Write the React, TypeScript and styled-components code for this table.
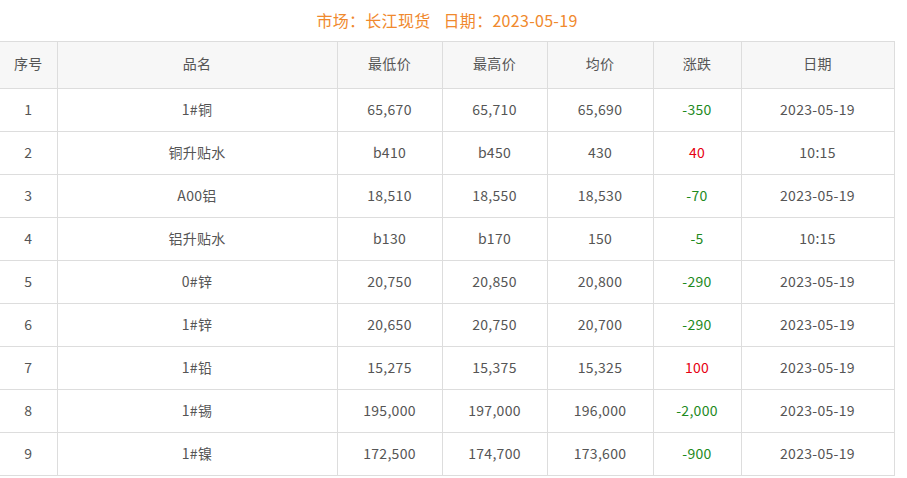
import { FC } from "react";
import styled, { createGlobalStyle } from "styled-components";

const GlobalStyle = createGlobalStyle`
	body {
		margin: 0;
		background: #fff;
		font-family: "Noto Sans CJK SC", "Noto Sans", sans-serif;
	}
`;

const Page = styled.div`
	width: 894px;
`;

const Title = styled.h2`
	display: flex;
	justify-content: center;
	gap: 13px;
	margin: 0;
	height: 41px;
	line-height: 40px;
	font-size: 16px;
	font-weight: normal;
	color: #f0892d;
	letter-spacing: 0.3px;
`;

const Table = styled.table`
	width: 894px;
	border-collapse: collapse;
	table-layout: fixed;
	font-size: 14px;
	color: #555;
	letter-spacing: 0.3px;
`;

const HeadCell = styled.th`
	height: 42px;
	padding: 0 0 4px;
	font-weight: normal;
	background: #f7f7f7;
	border: 1px solid #ddd;
	text-align: center;

	&:first-child {
		border-left: none;
	}
`;

const Cell = styled.td<{ $tone?: "up" | "down" }>`
	height: 39px;
	padding: 0 0 3px;
	border: 1px solid #ddd;
	text-align: center;
	color: ${(props) =>
		props.$tone === "up" ? "#e60012" : props.$tone === "down" ? "#1e8a1e" : "#555"};

	&:first-child {
		border-left: none;
	}
`;

type Row = {
	name: string;
	low: string;
	high: string;
	avg: string;
	change: string;
	date: string;
};

const columns = [
	{ label: "序号", width: 57 },
	{ label: "品名", width: 280 },
	{ label: "最低价", width: 105 },
	{ label: "最高价", width: 105 },
	{ label: "均价", width: 106 },
	{ label: "涨跌", width: 88 },
	{ label: "日期", width: 153 },
];

const rows: Row[] = [
	{ name: "1#铜", low: "65,670", high: "65,710", avg: "65,690", change: "-350", date: "2023-05-19" },
	{ name: "铜升贴水", low: "b410", high: "b450", avg: "430", change: "40", date: "10:15" },
	{ name: "A00铝", low: "18,510", high: "18,550", avg: "18,530", change: "-70", date: "2023-05-19" },
	{ name: "铝升贴水", low: "b130", high: "b170", avg: "150", change: "-5", date: "10:15" },
	{ name: "0#锌", low: "20,750", high: "20,850", avg: "20,800", change: "-290", date: "2023-05-19" },
	{ name: "1#锌", low: "20,650", high: "20,750", avg: "20,700", change: "-290", date: "2023-05-19" },
	{ name: "1#铅", low: "15,275", high: "15,375", avg: "15,325", change: "100", date: "2023-05-19" },
	{ name: "1#锡", low: "195,000", high: "197,000", avg: "196,000", change: "-2,000", date: "2023-05-19" },
	{ name: "1#镍", low: "172,500", high: "174,700", avg: "173,600", change: "-900", date: "2023-05-19" },
];

const toneOf = (change: string) => (change.startsWith("-") ? "down" : "up");

const App: FC = () => (
	<Page>
		<GlobalStyle />
		<Title>
			<span>市场：长江现货</span>
			<span>日期：2023-05-19</span>
		</Title>
		<Table>
			<colgroup>
				{columns.map((c) => (
					<col key={c.label} style={{ width: c.width }} />
				))}
			</colgroup>
			<thead>
				<tr>
					{columns.map((c) => (
						<HeadCell key={c.label}>{c.label}</HeadCell>
					))}
				</tr>
			</thead>
			<tbody>
				{rows.map((r, i) => (
					<tr key={r.name}>
						<Cell>{i + 1}</Cell>
						<Cell>{r.name}</Cell>
						<Cell>{r.low}</Cell>
						<Cell>{r.high}</Cell>
						<Cell>{r.avg}</Cell>
						<Cell $tone={toneOf(r.change)}>{r.change}</Cell>
						<Cell>{r.date}</Cell>
					</tr>
				))}
			</tbody>
		</Table>
	</Page>
);

export default App;
